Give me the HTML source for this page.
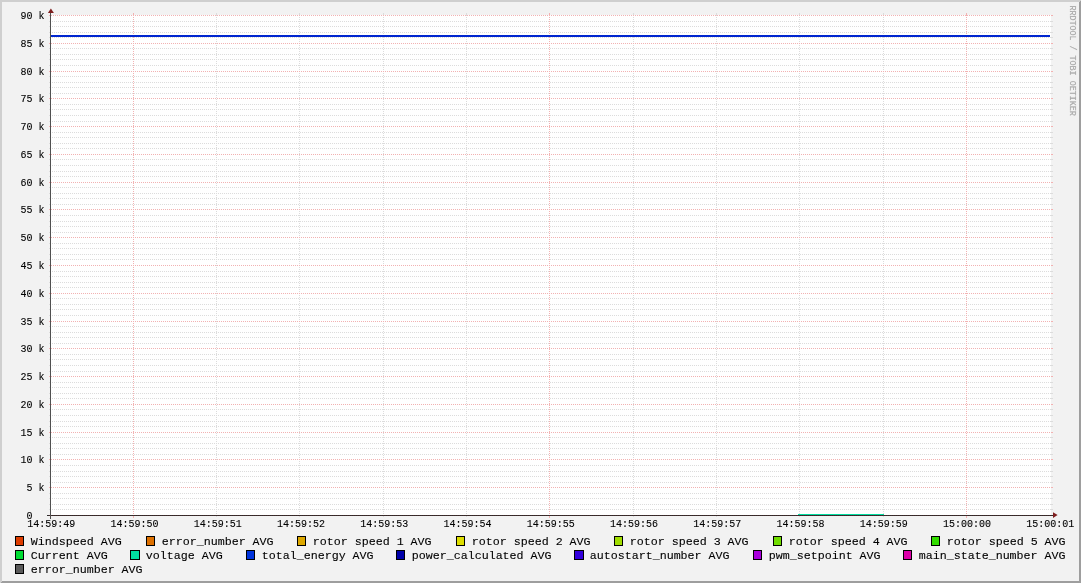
<!DOCTYPE html><html><head><meta charset="utf-8"><style>html,body{margin:0;padding:0;background:#f2f2f2;overflow:hidden}svg{display:block;will-change:transform}text{font-family:"Liberation Mono",monospace;fill:#000;stroke:#000;stroke-width:0.1px}</style></head><body>
<svg width="1081" height="583" viewBox="0 0 1081 583">
<rect x="0" y="0" width="1081" height="583" fill="#f2f2f2"/>
<polygon points="0,0 1081,0 1079,2 2,2 2,581 0,583" fill="#cfcfcf" shape-rendering="crispEdges"/>
<polygon points="1081,0 1081,583 0,583 2,581 1079,581 1079,2" fill="#9e9e9e" shape-rendering="crispEdges"/>
<rect x="51" y="15" width="1000" height="500" fill="#ffffff"/>
<path d="M52,509.5H1051M52,504.5H1051M52,498.5H1051M52,493.5H1051M52,482.5H1051M52,476.5H1051M52,471.5H1051M52,465.5H1051M52,454.5H1051M52,448.5H1051M52,443.5H1051M52,437.5H1051M52,426.5H1051M52,421.5H1051M52,415.5H1051M52,409.5H1051M52,398.5H1051M52,393.5H1051M52,387.5H1051M52,382.5H1051M52,371.5H1051M52,365.5H1051M52,359.5H1051M52,354.5H1051M52,343.5H1051M52,337.5H1051M52,332.5H1051M52,326.5H1051M52,315.5H1051M52,309.5H1051M52,304.5H1051M52,298.5H1051M52,287.5H1051M52,282.5H1051M52,276.5H1051M52,271.5H1051M52,259.5H1051M52,254.5H1051M52,248.5H1051M52,243.5H1051M52,232.5H1051M52,226.5H1051M52,221.5H1051M52,215.5H1051M52,204.5H1051M52,198.5H1051M52,193.5H1051M52,187.5H1051M52,176.5H1051M52,171.5H1051M52,165.5H1051M52,159.5H1051M52,148.5H1051M52,143.5H1051M52,137.5H1051M52,132.5H1051M52,121.5H1051M52,115.5H1051M52,109.5H1051M52,104.5H1051M52,93.5H1051M52,87.5H1051M52,82.5H1051M52,76.5H1051M52,65.5H1051M52,59.5H1051M52,54.5H1051M52,48.5H1051M52,37.5H1051M52,32.5H1051M52,26.5H1051M52,21.5H1051" stroke="#dcdcdc" stroke-width="1" stroke-dasharray="1 1" fill="none" shape-rendering="crispEdges"/>
<path d="M216.5,15V515M299.5,15V515M383.5,15V515M466.5,15V515M633.5,15V515M716.5,15V515M799.5,15V515M883.5,15V515" stroke="#dcdcdc" stroke-width="1" stroke-dasharray="1 1" fill="none" shape-rendering="crispEdges"/>
<path d="M49,509.5H50M1051,509.5H1053M49,504.5H50M1051,504.5H1053M49,498.5H50M1051,498.5H1053M49,493.5H50M1051,493.5H1053M49,482.5H50M1051,482.5H1053M49,476.5H50M1051,476.5H1053M49,471.5H50M1051,471.5H1053M49,465.5H50M1051,465.5H1053M49,454.5H50M1051,454.5H1053M49,448.5H50M1051,448.5H1053M49,443.5H50M1051,443.5H1053M49,437.5H50M1051,437.5H1053M49,426.5H50M1051,426.5H1053M49,421.5H50M1051,421.5H1053M49,415.5H50M1051,415.5H1053M49,409.5H50M1051,409.5H1053M49,398.5H50M1051,398.5H1053M49,393.5H50M1051,393.5H1053M49,387.5H50M1051,387.5H1053M49,382.5H50M1051,382.5H1053M49,371.5H50M1051,371.5H1053M49,365.5H50M1051,365.5H1053M49,359.5H50M1051,359.5H1053M49,354.5H50M1051,354.5H1053M49,343.5H50M1051,343.5H1053M49,337.5H50M1051,337.5H1053M49,332.5H50M1051,332.5H1053M49,326.5H50M1051,326.5H1053M49,315.5H50M1051,315.5H1053M49,309.5H50M1051,309.5H1053M49,304.5H50M1051,304.5H1053M49,298.5H50M1051,298.5H1053M49,287.5H50M1051,287.5H1053M49,282.5H50M1051,282.5H1053M49,276.5H50M1051,276.5H1053M49,271.5H50M1051,271.5H1053M49,259.5H50M1051,259.5H1053M49,254.5H50M1051,254.5H1053M49,248.5H50M1051,248.5H1053M49,243.5H50M1051,243.5H1053M49,232.5H50M1051,232.5H1053M49,226.5H50M1051,226.5H1053M49,221.5H50M1051,221.5H1053M49,215.5H50M1051,215.5H1053M49,204.5H50M1051,204.5H1053M49,198.5H50M1051,198.5H1053M49,193.5H50M1051,193.5H1053M49,187.5H50M1051,187.5H1053M49,176.5H50M1051,176.5H1053M49,171.5H50M1051,171.5H1053M49,165.5H50M1051,165.5H1053M49,159.5H50M1051,159.5H1053M49,148.5H50M1051,148.5H1053M49,143.5H50M1051,143.5H1053M49,137.5H50M1051,137.5H1053M49,132.5H50M1051,132.5H1053M49,121.5H50M1051,121.5H1053M49,115.5H50M1051,115.5H1053M49,109.5H50M1051,109.5H1053M49,104.5H50M1051,104.5H1053M49,93.5H50M1051,93.5H1053M49,87.5H50M1051,87.5H1053M49,82.5H50M1051,82.5H1053M49,76.5H50M1051,76.5H1053M49,65.5H50M1051,65.5H1053M49,59.5H50M1051,59.5H1053M49,54.5H50M1051,54.5H1053M49,48.5H50M1051,48.5H1053M49,37.5H50M1051,37.5H1053M49,32.5H50M1051,32.5H1053M49,26.5H50M1051,26.5H1053M49,21.5H50M1051,21.5H1053M216.5,13V15M216.5,516V517M299.5,13V15M299.5,516V517M383.5,13V15M383.5,516V517M466.5,13V15M466.5,516V517M633.5,13V15M633.5,516V517M716.5,13V15M716.5,516V517M799.5,13V15M799.5,516V517M883.5,13V15M883.5,516V517" stroke="#dcdcdc" stroke-width="1" fill="none" shape-rendering="crispEdges"/>
<path d="M49,487.5H1052M49,459.5H1052M49,432.5H1052M49,404.5H1052M49,376.5H1052M49,348.5H1052M49,321.5H1052M49,293.5H1052M49,265.5H1052M49,237.5H1052M49,209.5H1052M49,182.5H1052M49,154.5H1052M49,126.5H1052M49,98.5H1052M49,71.5H1052M49,43.5H1052M49,15.5H1052" stroke="#f2b2b2" stroke-width="1" stroke-dasharray="1 1" fill="none" shape-rendering="crispEdges"/>
<path d="M133.5,15V515M549.5,15V515M966.5,15V515" stroke="#f2b2b2" stroke-width="1" stroke-dasharray="1 1" fill="none" shape-rendering="crispEdges"/>
<path d="M49,487.5H50M1051,487.5H1053M49,459.5H50M1051,459.5H1053M49,432.5H50M1051,432.5H1053M49,404.5H50M1051,404.5H1053M49,376.5H50M1051,376.5H1053M49,348.5H50M1051,348.5H1053M49,321.5H50M1051,321.5H1053M49,293.5H50M1051,293.5H1053M49,265.5H50M1051,265.5H1053M49,237.5H50M1051,237.5H1053M49,209.5H50M1051,209.5H1053M49,182.5H50M1051,182.5H1053M49,154.5H50M1051,154.5H1053M49,126.5H50M1051,126.5H1053M49,98.5H50M1051,98.5H1053M49,71.5H50M1051,71.5H1053M49,43.5H50M1051,43.5H1053M49,15.5H50M1051,15.5H1053M133.5,13V15M133.5,516V518M549.5,13V15M549.5,516V518M966.5,13V15M966.5,516V518" stroke="#f2b2b2" stroke-width="1" fill="none" shape-rendering="crispEdges"/>
<rect x="51" y="35" width="999" height="2" fill="#0026d0"/>
<rect x="798" y="514" width="86" height="1" fill="#00dda0"/>
<path d="M47,515.5H1053" stroke="#2c2c2c" stroke-width="1" fill="none" shape-rendering="crispEdges"/>
<path d="M50.5,13V519" stroke="#505050" stroke-width="1" fill="none" shape-rendering="crispEdges"/>
<path d="M49,515.5H1052" stroke="#5a2a2a" stroke-opacity="0.6" stroke-width="1" stroke-dasharray="1 1" fill="none" shape-rendering="crispEdges"/>
<polygon points="47.9,13 53.9,13 50.9,8.6" fill="#7f1f1f"/>
<polygon points="1053,512.2 1053,518 1057.6,515.1" fill="#7f1f1f"/>
<text x="26.5" y="519" font-size="10" xml:space="preserve">0  </text>
<text x="26.5" y="491" font-size="10" xml:space="preserve">5 k</text>
<text x="20.5" y="463" font-size="10" xml:space="preserve">10 k</text>
<text x="20.5" y="436" font-size="10" xml:space="preserve">15 k</text>
<text x="20.5" y="408" font-size="10" xml:space="preserve">20 k</text>
<text x="20.5" y="380" font-size="10" xml:space="preserve">25 k</text>
<text x="20.5" y="352" font-size="10" xml:space="preserve">30 k</text>
<text x="20.5" y="325" font-size="10" xml:space="preserve">35 k</text>
<text x="20.5" y="297" font-size="10" xml:space="preserve">40 k</text>
<text x="20.5" y="269" font-size="10" xml:space="preserve">45 k</text>
<text x="20.5" y="241" font-size="10" xml:space="preserve">50 k</text>
<text x="20.5" y="213" font-size="10" xml:space="preserve">55 k</text>
<text x="20.5" y="186" font-size="10" xml:space="preserve">60 k</text>
<text x="20.5" y="158" font-size="10" xml:space="preserve">65 k</text>
<text x="20.5" y="130" font-size="10" xml:space="preserve">70 k</text>
<text x="20.5" y="102" font-size="10" xml:space="preserve">75 k</text>
<text x="20.5" y="75" font-size="10" xml:space="preserve">80 k</text>
<text x="20.5" y="47" font-size="10" xml:space="preserve">85 k</text>
<text x="20.5" y="19" font-size="10" xml:space="preserve">90 k</text>
<text x="27.30" y="527" font-size="10">14:59:49</text>
<text x="110.54" y="527" font-size="10">14:59:50</text>
<text x="193.78" y="527" font-size="10">14:59:51</text>
<text x="277.02" y="527" font-size="10">14:59:52</text>
<text x="360.26" y="527" font-size="10">14:59:53</text>
<text x="443.50" y="527" font-size="10">14:59:54</text>
<text x="526.74" y="527" font-size="10">14:59:55</text>
<text x="609.98" y="527" font-size="10">14:59:56</text>
<text x="693.22" y="527" font-size="10">14:59:57</text>
<text x="776.46" y="527" font-size="10">14:59:58</text>
<text x="859.70" y="527" font-size="10">14:59:59</text>
<text x="942.94" y="527" font-size="10">15:00:00</text>
<text x="1026.18" y="527" font-size="10">15:00:01</text>
<rect x="15.5" y="536.5" width="8" height="9" fill="#dd3c00" stroke="#000" stroke-width="1"/>
<text x="30.7" y="545" font-size="11.665">Windspeed AVG</text>
<rect x="146.5" y="536.5" width="8" height="9" fill="#dd7000" stroke="#000" stroke-width="1"/>
<text x="161.7" y="545" font-size="11.665">error_number AVG</text>
<rect x="297.5" y="536.5" width="8" height="9" fill="#dda800" stroke="#000" stroke-width="1"/>
<text x="312.7" y="545" font-size="11.665">rotor speed 1 AVG</text>
<rect x="456.5" y="536.5" width="8" height="9" fill="#dddd00" stroke="#000" stroke-width="1"/>
<text x="471.7" y="545" font-size="11.665">rotor speed 2 AVG</text>
<rect x="614.5" y="536.5" width="8" height="9" fill="#a0dd00" stroke="#000" stroke-width="1"/>
<text x="629.7" y="545" font-size="11.665">rotor speed 3 AVG</text>
<rect x="773.5" y="536.5" width="8" height="9" fill="#70dd00" stroke="#000" stroke-width="1"/>
<text x="788.7" y="545" font-size="11.665">rotor speed 4 AVG</text>
<rect x="931.5" y="536.5" width="8" height="9" fill="#33dd00" stroke="#000" stroke-width="1"/>
<text x="946.7" y="545" font-size="11.665">rotor speed 5 AVG</text>
<rect x="15.5" y="550.5" width="8" height="9" fill="#00dd33" stroke="#000" stroke-width="1"/>
<text x="30.7" y="559" font-size="11.665">Current AVG</text>
<rect x="130.5" y="550.5" width="9" height="9" fill="#00dda0" stroke="#000" stroke-width="1"/>
<text x="145.7" y="559" font-size="11.665">voltage AVG</text>
<rect x="246.5" y="550.5" width="8" height="9" fill="#0033dd" stroke="#000" stroke-width="1"/>
<text x="261.7" y="559" font-size="11.665">total_energy AVG</text>
<rect x="396.5" y="550.5" width="8" height="9" fill="#0000aa" stroke="#000" stroke-width="1"/>
<text x="411.7" y="559" font-size="11.665">power_calculated AVG</text>
<rect x="574.5" y="550.5" width="9" height="9" fill="#3300dd" stroke="#000" stroke-width="1"/>
<text x="589.7" y="559" font-size="11.665">autostart_number AVG</text>
<rect x="753.5" y="550.5" width="8" height="9" fill="#aa00dd" stroke="#000" stroke-width="1"/>
<text x="768.7" y="559" font-size="11.665">pwm_setpoint AVG</text>
<rect x="903.5" y="550.5" width="8" height="9" fill="#dd00aa" stroke="#000" stroke-width="1"/>
<text x="918.7" y="559" font-size="11.665">main_state_number AVG</text>
<rect x="15.5" y="564.5" width="8" height="9" fill="#5a5a5a" stroke="#000" stroke-width="1"/>
<text x="30.7" y="573" font-size="11.665">error_number AVG</text>
<text transform="translate(1070,5.4) rotate(90)" font-size="8.37" style="fill:#a9a9a9;stroke:#a9a9a9;stroke-width:0.15px">RRDTOOL / TOBI OETIKER</text>
</svg></body></html>
